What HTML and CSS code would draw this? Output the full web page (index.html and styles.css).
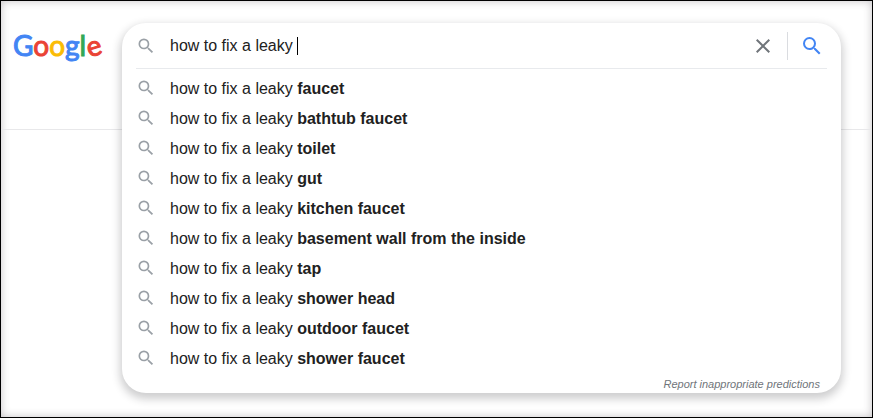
FILE: index.html
```
<!DOCTYPE html>
<html lang="en">
<head>
<meta charset="utf-8">
<meta name="viewport" content="width=device-width, initial-scale=1">
<title>how to fix a leaky</title>
<link rel="stylesheet" href="styles.css">
</head>
<body>
<svg class="sprite" aria-hidden="true">
  <symbol id="search" viewBox="0 0 24 24"><path d="M15.5 14h-.79l-.28-.27A6.471 6.471 0 0 0 16 9.5 6.5 6.5 0 1 0 9.5 16c1.61 0 3.09-.59 4.23-1.57l.27.28v.79l5 4.99L20.49 19l-4.99-5zm-6 0C7.01 14 5 11.99 5 9.5S7.01 5 9.5 5 14 7.01 14 9.5 11.99 14 9.5 14z"/></symbol>
  <symbol id="close" viewBox="0 0 24 24"><path d="M19 6.41L17.59 5 12 10.59 6.41 5 5 6.41 10.59 12 5 17.59 6.41 19 12 13.41 17.59 19 19 17.59 13.41 12z"/></symbol>
</svg>
<header class="header">
  <a class="logo" href="#" aria-label="Google"><span class="blue">G</span><span class="red">o</span><span class="yellow">o</span><span class="blue">g</span><span class="green">l</span><span class="red tilt">e</span></a>
  <form class="search">
    <div class="panel">
      <div class="bar">
        <svg class="icon"><use href="#search"/></svg>
        <label class="field"><input class="query" type="text" aria-label="Search" value="how to fix a leaky "><span class="caret"></span></label>
        <button class="action clear" type="button" aria-label="Clear"><svg><use href="#close"/></svg></button>
        <button class="action submit" type="submit" aria-label="Google Search"><svg><use href="#search"/></svg></button>
      </div>
      <ul class="suggestions">
        <li><a href="#"><svg class="icon"><use href="#search"/></svg><span>how to fix a leaky <b>faucet</b></span></a></li>
        <li><a href="#"><svg class="icon"><use href="#search"/></svg><span>how to fix a leaky <b>bathtub faucet</b></span></a></li>
        <li><a href="#"><svg class="icon"><use href="#search"/></svg><span>how to fix a leaky <b>toilet</b></span></a></li>
        <li><a href="#"><svg class="icon"><use href="#search"/></svg><span>how to fix a leaky <b>gut</b></span></a></li>
        <li><a href="#"><svg class="icon"><use href="#search"/></svg><span>how to fix a leaky <b>kitchen faucet</b></span></a></li>
        <li><a href="#"><svg class="icon"><use href="#search"/></svg><span>how to fix a leaky <b>basement wall from the inside</b></span></a></li>
        <li><a href="#"><svg class="icon"><use href="#search"/></svg><span>how to fix a leaky <b>tap</b></span></a></li>
        <li><a href="#"><svg class="icon"><use href="#search"/></svg><span>how to fix a leaky <b>shower head</b></span></a></li>
        <li><a href="#"><svg class="icon"><use href="#search"/></svg><span>how to fix a leaky <b>outdoor faucet</b></span></a></li>
        <li><a href="#"><svg class="icon"><use href="#search"/></svg><span>how to fix a leaky <b>shower faucet</b></span></a></li>
      </ul>
      <a class="report" href="#">Report inappropriate predictions</a>
    </div>
  </form>
</header>
</body>
</html>
```
FILE: styles.css
```
* {
  box-sizing: border-box;
}

body {
  margin: 0;
  min-height: 100vh;
  border: 1px solid #000;
  box-shadow: inset 0 0 8px rgba(60, 50, 60, 0.3);
  background: #fff;
  color: #212121;
  font-family: "Liberation Sans", Arial, sans-serif;
  font-size: 16px;
}

a {
  color: inherit;
  text-decoration: none;
}

svg {
  display: block;
  fill: currentColor;
}

.sprite {
  position: absolute;
  width: 0;
  height: 0;
}

.header {
  display: flex;
  align-items: flex-start;
  height: 129px;
  padding: 22px 31px 0 12px;
  border-bottom: 1px solid #e8e8ea;
}

.logo {
  flex: 0 0 109px;
  font-family: Lato, sans-serif;
  font-size: 28px;
  line-height: 44px;
  -webkit-text-stroke: 1px currentColor;
}

.blue { color: #4285f4; }
.red { color: #ea4335; }
.yellow { color: #fbbc05; }
.green { color: #34a853; }

.tilt {
  display: inline-block;
  transform: rotate(-16deg);
}

.search {
  position: relative;
  flex: 1;
}

.panel {
  position: absolute;
  top: 0;
  left: 0;
  right: 0;
  padding: 0 14px;
  border-radius: 24px;
  background: #fff;
  box-shadow: 0 4px 8px 2px rgba(32, 33, 36, 0.22);
}

.bar {
  display: flex;
  align-items: center;
  height: 46px;
  border-bottom: 1px solid #e8eaed;
}

.icon {
  flex: none;
  width: 20px;
  height: 20px;
  margin-right: 14px;
  color: #9aa0a6;
}

.field {
  display: flex;
  flex: 1;
  align-items: center;
  min-width: 0;
  cursor: text;
}

.query {
  field-sizing: content;
  max-width: 100%;
  padding: 0;
  border: 0;
  outline: 0;
  background: none;
  color: inherit;
  font: inherit;
}

.caret {
  width: 1px;
  height: 18px;
  background: #000;
}

.action {
  padding: 0;
  border: 0;
  background: none;
}

.action svg {
  width: 24px;
  height: 24px;
}

.clear {
  padding-right: 12px;
  color: #70757a;
}

.submit {
  padding: 2px 3px 2px 12px;
  border-left: 1px solid #dadce0;
  color: #4285f4;
}

.suggestions {
  margin: 0;
  padding: 4px 0 0;
  list-style: none;
}

.suggestions a {
  display: flex;
  align-items: center;
  height: 30px;
}

.suggestions span {
  padding-top: 2px;
}

.report {
  display: block;
  padding: 4px 7px 2px 0;
  color: #70757a;
  font-size: 11px;
  font-style: italic;
  line-height: 14px;
  text-align: right;
}
```
